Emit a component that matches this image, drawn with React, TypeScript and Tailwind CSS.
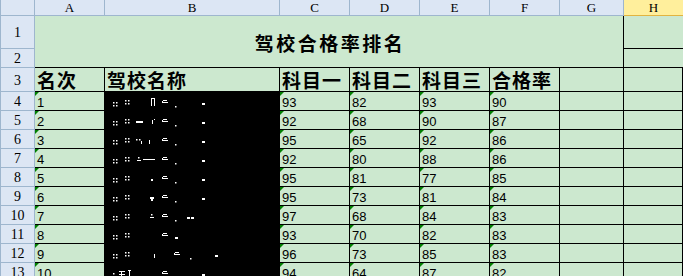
import React from 'react';

// Driving school pass-rate sheet, Excel 2007 look with eye-care green cells
const COLS = ['A', 'B', 'C', 'D', 'E', 'F', 'G', 'H'];

const rows = [
    [1, 93, 82, 93, 90],
    [2, 92, 68, 90, 87],
    [3, 95, 65, 92, 86],
    [4, 92, 80, 88, 86],
    [5, 95, 81, 77, 85],
    [6, 95, 73, 81, 84],
    [7, 97, 68, 84, 83],
    [8, 93, 70, 82, 83],
    [9, 96, 73, 85, 83],
    [10, 94, 64, 87, 82],
];

type Mark = [number, number, number, number];

// leftover pixels of the redacted school names
const dots: Mark[] = [
    [8, 10, 1.5, 1.5], [11, 10, 1.5, 1.5], [8, 13, 1.5, 1.5], [11, 13, 1.5, 1.5],
    [20, 8, 1.5, 1.5], [23, 8, 1.5, 1.5], [20, 11, 1.5, 1.5], [23, 11, 1.5, 1.5],
];
const angle = (x: number): Mark[] => [[x + 1, 8, 4, 1], [x, 10, 6, 1], [x, 9, 1, 2]];
const tail: Mark[] = [[70, 14, 1.5, 1.5], [97, 11, 3, 2]];

const marks: Mark[][] = [
    [...dots, [46, 6, 1, 8], [46, 6, 4, 1], [49, 6, 1, 8], ...angle(57), ...tail],
    [...dots, [31, 10, 7, 2], [47, 9, 1, 4], [49, 8, 1, 1], ...angle(57), ...tail],
    [...dots, [31, 9, 1.5, 1.5], [34, 9, 1.5, 1.5], [36, 11, 1, 3], [44, 10, 1, 4], ...angle(57), ...tail],
    [...dots, [33, 8, 1.5, 1.5], [32, 11, 4, 1], [38, 10, 12, 1], ...angle(57), ...tail],
    [...dots, [46, 11, 2, 2], ...angle(57), ...tail],
    [...dots, [45, 10, 4, 2], [46, 12, 2, 2], ...angle(57), ...tail],
    [...dots, [46, 8, 1.5, 1.5], [45, 11, 4, 1], ...angle(57), [70, 14, 1.5, 1.5], [82, 11, 3, 2], [86, 11, 3, 2]],
    [...dots, ...angle(57), [70, 12, 3, 2]],
    [...dots, [49, 10, 1, 4], ...angle(69), [85, 14, 1.5, 1.5], [110, 11, 3, 2]],
    [[8, 10, 1.5, 1.5], [8, 13, 1.5, 1.5], [14, 8, 6, 1], [14, 11, 6, 1], [16, 8, 1, 6], [24, 7, 1, 7], [23, 7, 3, 1], ...angle(57), [97, 11, 3, 2]],
];

function Redacted({ i }: { i: number }) {
    return (
        <svg width="175" height="18" viewBox="0 0 175 18" className="block">
            {marks[i].map(([x, y, w, h], k) => (
                <rect key={k} x={x} y={y} width={w} height={h} fill="#ffffff" />
            ))}
        </svg>
    );
}

function RowHead({ n }: { n: number }) {
    return (
        <div className="flex items-center justify-center pt-[2px] bg-[#dce6f4] border-l border-r border-b border-[#9eb6ce] text-[14px] leading-[16px] text-black font-['Liberation_Serif',serif]">
            {n}
        </div>
    );
}

function NumCell({ v }: { v: number }) {
    return (
        <div className="relative flex items-end pl-[2px] bg-[#cce8cf] border-r border-b border-black text-[13px] leading-[15px] text-black font-['Liberation_Sans',Arial,sans-serif]">
            <span className="absolute top-0 left-0 w-0 h-0 border-t-[4px] border-r-[4px] border-t-[#008000] border-r-transparent" />
            {v}
        </div>
    );
}

function HeadCell({ label }: { label?: string }) {
    return (
        <div className="flex items-center pl-[2px] bg-[#cce8cf] border-r border-b border-black text-[19px] leading-[20px] font-bold tracking-[1px] text-black font-['Noto_Sans_CJK_SC',sans-serif]">
            {label}
        </div>
    );
}

export default function App() {
    return (
        <div className="w-[683px] h-[276px] overflow-hidden bg-white">
            <div className="grid grid-cols-[35px_70px_175px_70px_70px_70px_70px_64px_59px] grid-rows-[16px_33px_19px_24px_repeat(10,19px)]">
                {/* Column headers */}
                <div className="bg-[#dce6f4] border-l border-r border-b border-[#9eb6ce]" />
                {COLS.map((c) =>
                    c === 'H' ? (
                        <div
                            key={c}
                            className="flex items-center justify-center bg-[#ffef9c] border-b border-[#e2b441] text-[13px] text-black font-['Liberation_Serif',serif]"
                        >
                            {c}
                        </div>
                    ) : (
                        <div
                            key={c}
                            className="flex items-center justify-center bg-[#dce6f4] border-r border-b border-[#9eb6ce] text-[13px] text-black font-['Liberation_Serif',serif]"
                        >
                            {c}
                        </div>
                    )
                )}

                {/* Title rows 1-2 */}
                <RowHead n={1} />
                <div className="col-span-7 row-span-2 flex items-center justify-center pt-[3px] pl-[2px] bg-[#cce8cf] border-r border-b border-black text-[19px] leading-[22px] font-bold tracking-[2.5px] text-black font-['Noto_Sans_CJK_SC',sans-serif]">
                    驾校合格率排名
                </div>
                <div className="bg-[#cce8cf] border-b border-black" />
                <RowHead n={2} />
                <div className="col-start-9 bg-[#cce8cf] border-b border-black" />

                {/* Header row 3 */}
                <RowHead n={3} />
                <HeadCell label="名次" />
                <HeadCell label="驾校名称" />
                <HeadCell label="科目一" />
                <HeadCell label="科目二" />
                <HeadCell label="科目三" />
                <HeadCell label="合格率" />
                <HeadCell />
                <HeadCell />

                {/* Data rows */}
                {rows.map(([rank, k1, k2, k3, rate], i) => (
                    <React.Fragment key={rank}>
                        <RowHead n={i + 4} />
                        <NumCell v={rank} />
                        <div className="bg-black overflow-hidden">
                            <Redacted i={i} />
                        </div>
                        <NumCell v={k1} />
                        <NumCell v={k2} />
                        <NumCell v={k3} />
                        <NumCell v={rate} />
                        <div className="bg-[#cce8cf] border-r border-b border-black" />
                        <div className="bg-[#cce8cf] border-r border-b border-black" />
                    </React.Fragment>
                ))}
            </div>
        </div>
    );
}
